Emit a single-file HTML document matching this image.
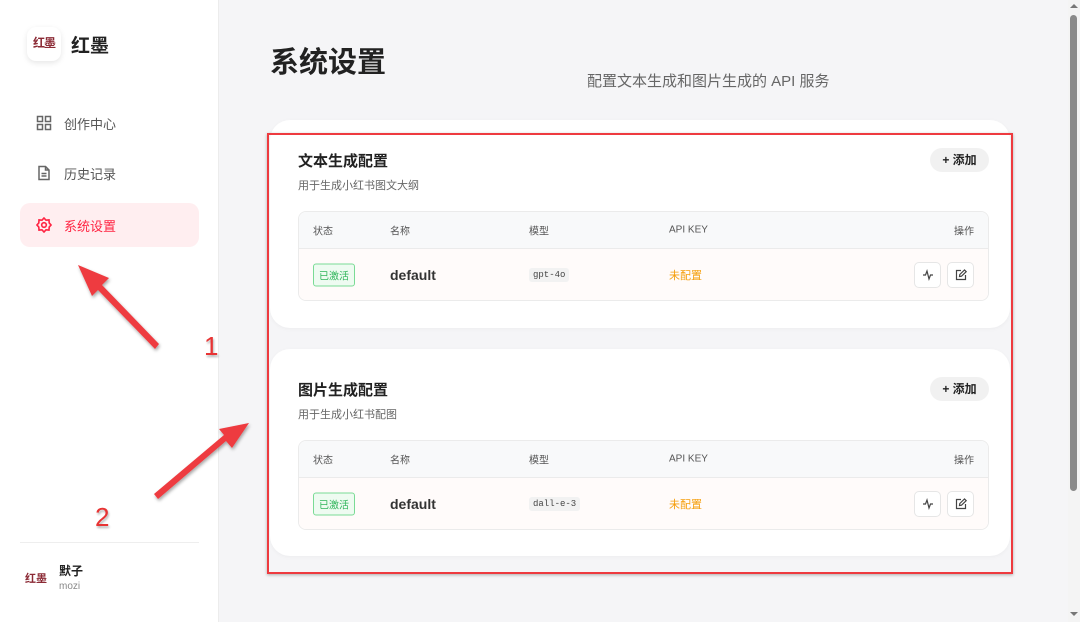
<!DOCTYPE html>
<html><head><meta charset="utf-8"><style>
*{box-sizing:border-box;margin:0;padding:0}
body{width:1080px;height:622px;overflow:hidden;background:#f5f5f7;font-family:"Liberation Sans","Noto Sans CJK SC",sans-serif;position:relative;color:#222}
.side{position:absolute;left:0;top:0;width:219px;height:622px;background:#fff;border-right:1px solid #ececec}
.logo{position:absolute;left:27px;top:27px;width:34px;height:34px;border-radius:9px;background:#fff;box-shadow:0 2px 6px rgba(0,0,0,.1);font-size:12px;font-weight:bold;color:#8b2a35;text-align:center;line-height:32px;letter-spacing:-1px}
.brand{position:absolute;left:71px;top:31px;font-size:19px;font-weight:bold;color:#222}
.nav{position:absolute;left:20px;width:179px;height:44px;border-radius:10px;display:flex;align-items:center;padding-left:16px;font-size:13px;color:#555}
.nav svg{margin-right:12px}
.nav.act{background:#ffeef0;color:#ff2442}
.hr{position:absolute;left:20px;top:542px;width:179px;border-top:1px solid #eee}
.main h1{position:absolute;left:270px;top:39px;font-size:29px;font-weight:bold;color:#222}
.sub{position:absolute;left:587px;top:70px;font-size:15px;color:#666}
.card{position:absolute;left:270px;width:740px;background:#fff;border-radius:20px;box-shadow:0 1px 4px rgba(0,0,0,.04)}
.ct{position:absolute;left:28px;font-size:15px;font-weight:bold;color:#222}
.cs{position:absolute;left:28px;font-size:11px;color:#666}
.add{position:absolute;right:21px;width:59px;height:24px;border-radius:12px;background:#f1f1f1;font-size:12px;font-weight:bold;text-align:center;line-height:24px;color:#222}
.tbl{position:absolute;left:28px;width:691px;height:90px;border:1px solid #ebebeb;border-radius:8px;overflow:hidden}
.th{height:37px;background:#f8f9fa;border-bottom:1px solid #ebebeb;position:relative;font-size:10px;color:#555}
.tr{height:52px;background:#fffbfa;position:relative}
.th span,.tr>span{position:absolute;top:50%;transform:translateY(-50%)}
.badge{left:14px;border:1px solid #7adb95;background:#eefbf1;color:#2fb55a;font-size:10px;padding:3px 5px;border-radius:3px}
.nm{left:91px;font-size:14px;font-weight:bold;color:#333}
.md{left:230px;font-family:"Liberation Mono",monospace;font-size:9px;background:#f2f2f2;padding:2px 4px;border-radius:3px;color:#444}
.un{left:370px;font-size:11px;color:#f59e0b}
.ib{position:absolute;top:13px;width:27px;height:26px;border:1px solid #e6e6e6;border-radius:5px;background:#fff;display:flex;align-items:center;justify-content:center}
.red{position:absolute;left:267px;top:133px;width:746px;height:441px;border:2px solid #ee3a3f;box-shadow:0 1px 3px rgba(0,0,0,.3)}
.num{position:absolute;font-size:26px;color:#e83434;text-shadow:1px 2px 2px rgba(0,0,0,.3)}
.sb{position:absolute;left:1068px;top:0;width:12px;height:622px;background:#f4f4f4}
</style></head><body>
<div class="side">
<div class="logo">红墨</div><div class="brand">红墨</div>
<div class="nav" style="top:101px"><svg width="16" height="16" viewBox="0 0 16 16" fill="none" stroke="#666" stroke-width="1.5"><rect x="1.5" y="1.5" width="5" height="5"/><rect x="9.5" y="1.5" width="5" height="5"/><rect x="1.5" y="9.5" width="5" height="5"/><rect x="9.5" y="9.5" width="5" height="5"/></svg>创作中心</div>
<div class="nav" style="top:151px"><svg width="16" height="16" viewBox="0 0 16 16" fill="none" stroke="#666" stroke-width="1.5"><path d="M3 1.5h6.5l3.5 3.5v9.5H3z M9.5 1.5V5H13 M5.5 8.5h5 M5.5 11h5"/></svg>历史记录</div>
<div class="nav act" style="top:203px"><svg width="16" height="16" viewBox="0 0 16 16" fill="none" stroke="#ff2442" stroke-width="1.6"><path d="M8 1l2 2.2 3-.3.2 3L15 8l-1.8 2.1-.2 3-3-.3L8 15l-2-2.2-3 .3-.2-3L1 8l1.8-2.1.2-3 3 .3z"/><circle cx="8" cy="8" r="2.3"/></svg>系统设置</div>
<div class="hr"></div>
<div style="position:absolute;left:25px;top:570px;font-size:11px;font-weight:bold;color:#8b2a35">红墨</div>
<div style="position:absolute;left:59px;top:562px;font-size:12px;font-weight:bold">默子</div>
<div style="position:absolute;left:59px;top:581px;font-size:10px;color:#888">mozi</div>
</div>
<div class="main"><h1>系统设置</h1><div class="sub">配置文本生成和图片生成的 API 服务</div></div>

<div class="card" style="top:120px;height:208px">
<div class="ct" style="top:30px">文本生成配置</div><div class="cs" style="top:57px">用于生成小红书图文大纲</div>
<div class="add" style="top:28px">+ 添加</div>
<div class="tbl" style="top:91px">
<div class="th"><span style="left:14px">状态</span><span style="left:91px">名称</span><span style="left:230px">模型</span><span style="left:370px">API KEY</span><span style="right:14px">操作</span></div>
<div class="tr"><span class="badge">已激活</span><span class="nm">default</span><span class="md">gpt-4o</span><span class="un">未配置</span>
<div class="ib" style="right:47px"><svg width="12" height="12" viewBox="0 0 12 12" fill="none" stroke="#444" stroke-width="1.2"><path d="M1 6h2.5l1.5-4 2 8 1.5-4H11"/></svg></div>
<div class="ib" style="right:14px"><svg width="12" height="12" viewBox="0 0 12 12" fill="none" stroke="#444" stroke-width="1.2"><path d="M6 1.5H1.5v9h9V6 M4.5 7.5l.3-2 4.7-4.5 1.7 1.7L6.5 7.2z"/></svg></div></div>
</div></div>

<div class="card" style="top:349px;height:207px">
<div class="ct" style="top:30px">图片生成配置</div><div class="cs" style="top:57px">用于生成小红书配图</div>
<div class="add" style="top:28px">+ 添加</div>
<div class="tbl" style="top:91px">
<div class="th"><span style="left:14px">状态</span><span style="left:91px">名称</span><span style="left:230px">模型</span><span style="left:370px">API KEY</span><span style="right:14px">操作</span></div>
<div class="tr"><span class="badge">已激活</span><span class="nm">default</span><span class="md">dall-e-3</span><span class="un">未配置</span>
<div class="ib" style="right:47px"><svg width="12" height="12" viewBox="0 0 12 12" fill="none" stroke="#444" stroke-width="1.2"><path d="M1 6h2.5l1.5-4 2 8 1.5-4H11"/></svg></div>
<div class="ib" style="right:14px"><svg width="12" height="12" viewBox="0 0 12 12" fill="none" stroke="#444" stroke-width="1.2"><path d="M6 1.5H1.5v9h9V6 M4.5 7.5l.3-2 4.7-4.5 1.7 1.7L6.5 7.2z"/></svg></div></div>
</div></div>

<div class="red"></div>
<svg style="position:absolute;left:0;top:0" width="1080" height="622">
<defs><filter id="s"><feDropShadow dx="1" dy="2" stdDeviation="1.5" flood-opacity=".35"/></filter></defs>
<g fill="#ee3a3f" filter="url(#s)">
<path d="M159 344 L102 285 L109 278 L78 265 L92 296 L98 290 L155 349z"/>
<path d="M158 499 L226 441 L232 448 L249 423 L219 429 L224 435 L154 494z"/>
</g></svg>
<div class="num" style="left:204px;top:331px">1</div>
<div class="num" style="left:95px;top:502px">2</div>
<div class="sb"><div style="position:absolute;left:2px;top:15px;width:7px;height:476px;border-radius:4px;background:#8a8a8a"></div>
<div style="position:absolute;left:2px;top:4px;border:4px solid transparent;border-bottom-color:#777;border-top:0"></div>
<div style="position:absolute;left:2px;top:612px;border:4px solid transparent;border-top-color:#777;border-bottom:0"></div></div>
</body></html>
